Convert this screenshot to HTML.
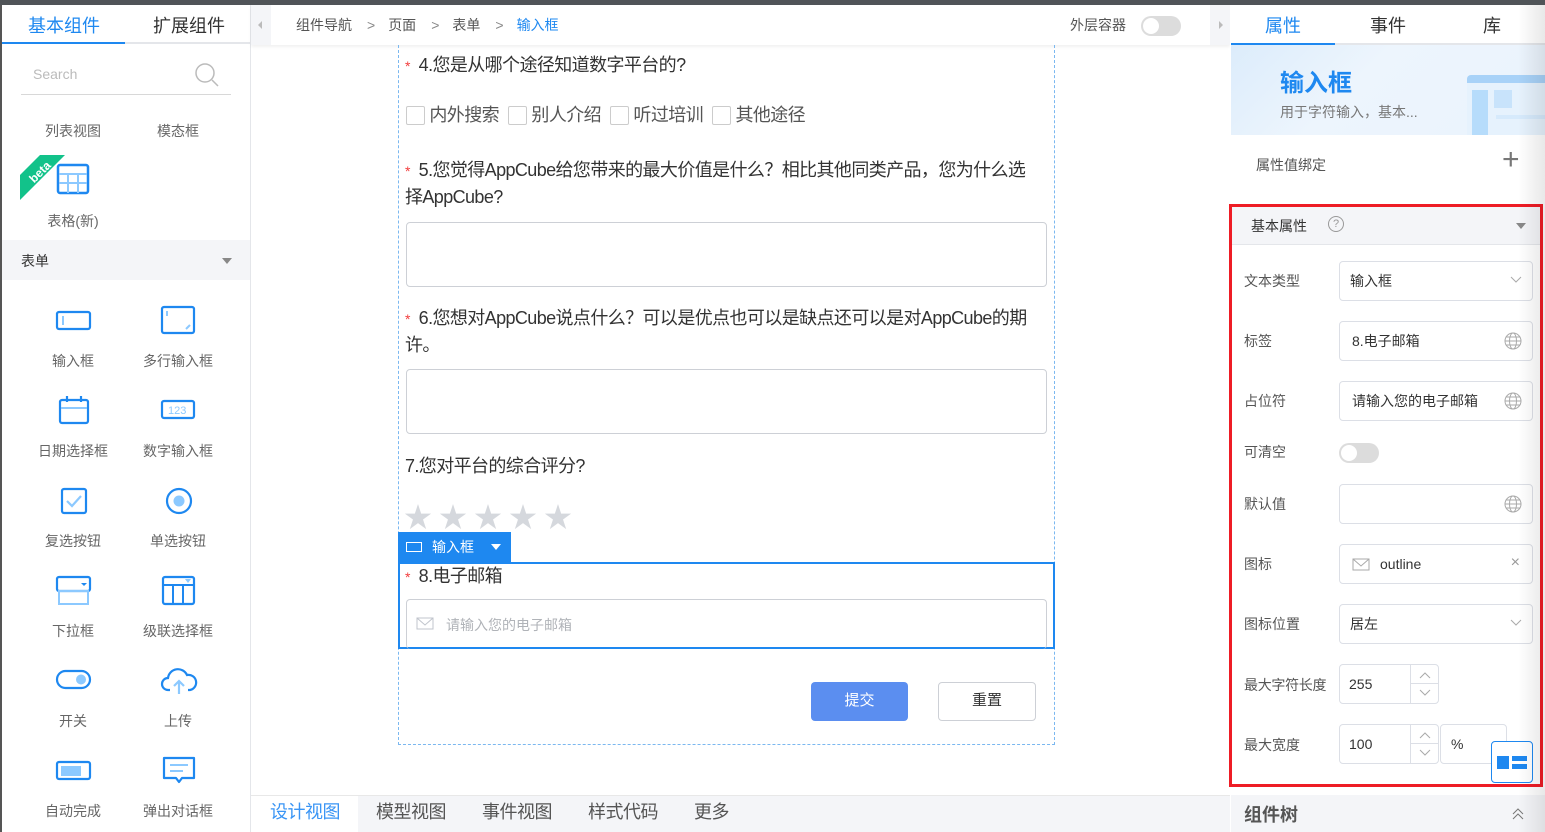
<!DOCTYPE html>
<html><head><meta charset="utf-8"><style>
*{box-sizing:border-box;margin:0;padding:0}
body{width:1545px;height:832px;overflow:hidden;background:#fff;font-family:"Liberation Sans","Noto Sans CJK SC",sans-serif;color:#333;position:relative}
.a{position:absolute}
.topbar{left:0;top:0;width:1545px;height:5px;background:#505458}
.lp{left:0;top:5px;width:251px;height:827px;background:#fff;border-right:1px solid #e4e6ea;border-left:2px solid #555}
.tab{font-size:18px;color:#333;white-space:nowrap}
.lbl{font-size:14px;color:#666;white-space:nowrap;text-align:center;width:110px}
.ic{stroke:#1e88f0;fill:none;stroke-width:2.2}
.cv{left:251px;top:5px;width:979px;height:827px;background:#fff}
.q{font-size:18px;color:#333;white-space:nowrap;letter-spacing:-0.6px}
.star{color:#d5d8dd;font-size:28px}
.req{color:#f23c3c;font-size:14px}
.rp{left:1230px;top:5px;width:315px;height:827px;background:#fff}
.fl{font-size:14px;color:#555;white-space:nowrap}
.inp{border:1px solid #dcdfe6;border-radius:4px;background:#fff;font-size:14px;color:#333;padding-left:12px;display:flex;align-items:center}
.glob{position:absolute;right:10px;top:50%;margin-top:-9px}
.chev{position:absolute;right:10px;top:50%;margin-top:-5px}
.cb{display:inline-block;width:19px;height:19px;border:1px solid #ccc;border-radius:2px;vertical-align:-4px}
</style></head><body>
<div class="a topbar"></div>

<!-- LEFT PANEL -->
<div class="a lp"></div>
<div class="a tab" style="left:28px;top:12px;color:#1e88f0">基本组件</div>
<div class="a tab" style="left:153px;top:12px">扩展组件</div>
<div class="a" style="left:2px;top:42px;width:248px;height:2px;background:#e4e6ea"></div>
<div class="a" style="left:2px;top:42px;width:123px;height:2px;background:#1e88f0"></div>
<div class="a" style="left:33px;top:66px;font-size:14px;color:#bbb">Search</div>
<svg class="a" style="left:194px;top:62px" width="26" height="26"><circle cx="11" cy="11" r="9" stroke="#bbb" stroke-width="1.5" fill="none"/><line x1="18" y1="18" x2="24" y2="24" stroke="#bbb" stroke-width="1.5"/></svg>
<div class="a" style="left:21px;top:94px;width:210px;height:1px;background:#d8d8d8"></div>
<div class="a lbl" style="left:18px;top:121px">列表视图</div>
<div class="a lbl" style="left:123px;top:121px">模态框</div>
<svg class="a" style="left:20px;top:155px" width="48" height="45"><polygon points="0,20 20,0 45,0 0,45" fill="#12c28a"/><text x="20" y="21" text-anchor="middle" transform="rotate(-45 20 17)" fill="#fff" font-size="12" font-weight="bold" font-family="Liberation Sans">beta</text></svg>
<svg class="a" style="left:56px;top:163px" width="34" height="32"><rect x="2" y="2" width="30" height="28" rx="2" stroke="#1e88f0" stroke-width="2.5" fill="none"/><path d="M3 11H31M3 20H31M12 11V30M22 11V30" stroke="#8cc9ff" stroke-width="2"/></svg>
<div class="a lbl" style="left:18px;top:211px">表格(新)</div>
<div class="a" style="left:2px;top:240px;width:248px;height:40px;background:#f4f5f8"></div>
<div class="a" style="left:21px;top:251px;font-size:14px;color:#333">表单</div>
<div class="a" style="left:222px;top:258px;border-left:5px solid transparent;border-right:5px solid transparent;border-top:6px solid #888"></div>

<svg class="a" style="left:55px;top:310px" width="38" height="22"><rect x="2" y="2" width="33" height="17" rx="2" class="ic"/><line x1="8" y1="6" x2="8" y2="15" stroke="#8cc9ff" stroke-width="2"/></svg>
<div class="a lbl" style="left:18px;top:351px">输入框</div>
<svg class="a" style="left:160px;top:305px" width="36" height="30"><rect x="2" y="2" width="32" height="26" rx="2" class="ic"/><line x1="7" y1="6" x2="7" y2="11" stroke="#8cc9ff" stroke-width="2"/><line x1="26" y1="24" x2="30" y2="20" stroke="#8cc9ff" stroke-width="2"/></svg>
<div class="a lbl" style="left:123px;top:351px">多行输入框</div>
<svg class="a" style="left:58px;top:395px" width="32" height="30"><rect x="2" y="5" width="28" height="23" rx="2" class="ic"/><path d="M9 1V7M23 1V7" class="ic"/><line x1="3" y1="13" x2="29" y2="13" stroke="#8cc9ff" stroke-width="2"/></svg>
<div class="a lbl" style="left:18px;top:441px">日期选择框</div>
<svg class="a" style="left:160px;top:399px" width="36" height="22"><rect x="2" y="2" width="32" height="17" rx="2" class="ic"/><text x="8" y="15" fill="#8cc9ff" font-size="11" font-family="Liberation Sans">123</text></svg>
<div class="a lbl" style="left:123px;top:441px">数字输入框</div>
<svg class="a" style="left:60px;top:487px" width="28" height="28"><rect x="2" y="2" width="24" height="24" rx="2" class="ic"/><path d="M7 14L12 19L21 9" stroke="#8cc9ff" stroke-width="2.2" fill="none"/></svg>
<div class="a lbl" style="left:18px;top:531px">复选按钮</div>
<svg class="a" style="left:165px;top:487px" width="28" height="28"><circle cx="14" cy="14" r="12" class="ic"/><circle cx="14" cy="14" r="5.5" fill="#8cc9ff"/></svg>
<div class="a lbl" style="left:123px;top:531px">单选按钮</div>
<svg class="a" style="left:55px;top:575px" width="38" height="32"><rect x="2" y="2" width="33" height="14" rx="2" class="ic"/><rect x="4" y="16" width="29" height="13" stroke="#8cc9ff" stroke-width="2" fill="none"/><polygon points="26,8 32,8 29,11" fill="#1e88f0"/></svg>
<div class="a lbl" style="left:18px;top:621px">下拉框</div>
<svg class="a" style="left:161px;top:575px" width="36" height="32"><rect x="2" y="2" width="31" height="27" rx="2" class="ic"/><path d="M3 10H32M12 11V29M22 11V29" stroke="#1e88f0" stroke-width="2"/><polygon points="24,4 30,4 27,8" fill="#8cc9ff"/></svg>
<div class="a lbl" style="left:123px;top:621px">级联选择框</div>
<svg class="a" style="left:55px;top:669px" width="38" height="22"><rect x="2" y="2" width="33" height="17" rx="8.5" class="ic"/><circle cx="26" cy="10.5" r="5" fill="#8cc9ff"/></svg>
<div class="a lbl" style="left:18px;top:711px">开关</div>
<svg class="a" style="left:160px;top:666px" width="38" height="30"><path d="M10 24H8A6 6 0 0 1 8 12A10 10 0 0 1 27 9A7.5 7.5 0 0 1 30 24H28" class="ic"/><path d="M19 28V16M14 20L19 15L24 20" stroke="#8cc9ff" stroke-width="2.2" fill="none"/></svg>
<div class="a lbl" style="left:123px;top:711px">上传</div>
<svg class="a" style="left:55px;top:760px" width="38" height="22"><rect x="2" y="2" width="33" height="17" rx="2" class="ic"/><rect x="6" y="6" width="20" height="10" fill="#8cc9ff"/></svg>
<div class="a lbl" style="left:18px;top:801px">自动完成</div>
<svg class="a" style="left:161px;top:755px" width="36" height="30"><path d="M3 3H33V23H21L18 27L15 23H3Z" class="ic" stroke-linejoin="round"/><path d="M9 10H27M9 16H22" stroke="#8cc9ff" stroke-width="2"/></svg>
<div class="a lbl" style="left:123px;top:801px">弹出对话框</div>

<!-- CENTER -->
<div class="a cv"></div>
<div class="a" style="left:251px;top:5px;width:979px;height:40px;background:#fff;box-shadow:0 2px 3px rgba(0,0,0,0.06)"></div>
<div class="a" style="left:251px;top:5px;width:20px;height:40px;background:#f4f5f8"></div>
<div class="a" style="left:258px;top:21px;border-top:4px solid transparent;border-bottom:4px solid transparent;border-right:4px solid #bbb"></div>
<div class="a" style="left:296px;top:15px;font-size:14px;color:#555;white-space:nowrap">组件导航<span style="margin:0 13px 0 15px;color:#888">&gt;</span>页面<span style="margin:0 13px 0 15px;color:#888">&gt;</span>表单<span style="margin:0 13px 0 15px;color:#888">&gt;</span><span style="color:#1e88f0">输入框</span></div>
<div class="a" style="left:1070px;top:15px;font-size:14px;color:#555">外层容器</div>
<div class="a" style="left:1141px;top:16px;width:40px;height:20px;border-radius:10px;background:#dcdcdc"><div style="position:absolute;left:2px;top:2px;width:16px;height:16px;border-radius:50%;background:#fff"></div></div>
<div class="a" style="left:1210px;top:5px;width:20px;height:40px;background:#f4f5f8"></div>
<div class="a" style="left:1219px;top:21px;border-top:4px solid transparent;border-bottom:4px solid transparent;border-left:4px solid #bbb"></div>

<div class="a" style="left:398px;top:45px;width:657px;height:700px;border:1px dashed #7bb8f0;border-top:none"></div>

<div class="a q" style="left:405px;top:51px"><span class="req">*</span>&nbsp; 4.您是从哪个途径知道数字平台的?</div>
<div class="a q" style="left:406px;top:101px;color:#555">
<span class="cb"></span> 内外搜索<span class="cb" style="margin-left:9px"></span> 别人介绍<span class="cb" style="margin-left:9px"></span> 听过培训<span class="cb" style="margin-left:9px"></span> 其他途径</div>

<div class="a q" style="left:405px;top:157px;line-height:26px"><span class="req">*</span>&nbsp; 5.您觉得AppCube给您带来的最大价值是什么？相比其他同类产品，您为什么选<br>择AppCube?</div>
<div class="a" style="left:406px;top:222px;width:641px;height:65px;border:1px solid #cdd0d6;border-radius:4px"></div>

<div class="a q" style="left:405px;top:305px;line-height:26px"><span class="req">*</span>&nbsp; 6.您想对AppCube说点什么？可以是优点也可以是缺点还可以是对AppCube的期<br>许。</div>
<div class="a" style="left:406px;top:369px;width:641px;height:65px;border:1px solid #cdd0d6;border-radius:4px"></div>

<div class="a q" style="left:405px;top:452px">7.您对平台的综合评分?</div>
<div class="a star" style="left:404px;top:496px;letter-spacing:7px">★★★★★</div>

<div class="a" style="left:398px;top:532px;width:113px;height:30px;background:#1e88f0;color:#fff;font-size:14px"><span style="position:absolute;left:8px;top:10px;width:16px;height:10px;border:1.5px solid #fff"></span><span style="position:absolute;left:34px;top:5px">输入框</span><span style="position:absolute;left:93px;top:12px;border-left:5px solid transparent;border-right:5px solid transparent;border-top:6px solid #fff"></span></div>
<div class="a" style="left:398px;top:562px;width:657px;height:87px;border:2px solid #1e88f0"></div>
<div class="a q" style="left:405px;top:562px"><span class="req">*</span>&nbsp; 8.电子邮箱</div>
<div class="a" style="left:406px;top:599px;width:641px;height:50px;border:1px solid #cdd0d6;border-radius:4px;border-bottom:none"></div>
<svg class="a" style="left:416px;top:617px" width="18" height="14"><rect x="1" y="1" width="16" height="11" stroke="#c0c4cc" fill="none"/><path d="M1 1L9 8L17 1" stroke="#c0c4cc" fill="none"/></svg>
<div class="a" style="left:446px;top:615px;font-size:14px;color:#b0b3b8">请输入您的电子邮箱</div>

<div class="a" style="left:811px;top:682px;width:97px;height:39px;background:#5b8ef0;border-radius:4px;color:#fff;font-size:15px;text-align:center;line-height:37px">提交</div>
<div class="a" style="left:938px;top:682px;width:98px;height:39px;border:1px solid #cdd0d6;border-radius:4px;color:#333;font-size:15px;text-align:center;line-height:35px">重置</div>

<div class="a" style="left:251px;top:795px;width:979px;height:37px;background:#f4f5f8;border-top:1px solid #e8e8e8"></div>
<div class="a" style="left:251px;top:796px;width:107px;height:36px;background:#fff"></div>
<div class="a" style="left:270px;top:798px;font-size:18px;color:#555;white-space:nowrap;letter-spacing:-0.5px"><span style="color:#3a95f5">设计视图</span><span style="margin-left:36px">模型视图</span><span style="margin-left:36px">事件视图</span><span style="margin-left:36px">样式代码</span><span style="margin-left:36px">更多</span></div>

<!-- RIGHT PANEL -->
<div class="a rp"></div>
<div class="a tab" style="left:1265px;top:12px;color:#1e88f0">属性</div>
<div class="a tab" style="left:1370px;top:12px">事件</div>
<div class="a tab" style="left:1483px;top:12px">库</div>
<div class="a" style="left:1231px;top:43px;width:314px;height:2px;background:#e4e6ea"></div>
<div class="a" style="left:1231px;top:43px;width:104px;height:2px;background:#1e88f0"></div>
<div class="a" style="left:1231px;top:45px;width:314px;height:90px;background:linear-gradient(135deg,#dcecfb 0%,#edf5fd 40%,#eaf3fd 100%)"></div>
<div class="a" style="left:1280px;top:63px;font-size:24px;font-weight:bold;color:#1e88f0">输入框</div>
<div class="a" style="left:1280px;top:102px;font-size:14px;color:#777">用于字符输入，基本...</div>
<div class="a" style="left:1467px;top:75px;width:80px;height:60px;background:#e6f2fd;border-top:8px solid #a8d2f8;border-radius:4px 0 0 0"></div>
<div class="a" style="left:1472px;top:90px;width:16px;height:45px;background:#b6dcfb"></div>
<div class="a" style="left:1494px;top:90px;width:18px;height:18px;background:#c8e3fb"></div>
<div class="a" style="left:1496px;top:115px;width:50px;height:4px;background:#d6eafc"></div>
<div class="a" style="left:1256px;top:155px;font-size:14px;color:#555">属性值绑定</div>
<div class="a" style="left:1502px;top:143px;font-size:30px;color:#777;font-weight:300">+</div>

<div class="a" style="left:1229px;top:204px;width:314px;height:583px;border:3px solid #ee1c25"></div>
<div class="a" style="left:1232px;top:207px;width:308px;height:38px;background:#f4f5f8;border-bottom:1px solid #e4e6ea"></div>
<div class="a" style="left:1251px;top:216px;font-size:14px;color:#333">基本属性</div>
<div class="a" style="left:1328px;top:216px;width:16px;height:16px;border:1px solid #999;border-radius:50%;font-size:11px;color:#999;text-align:center;line-height:14px">?</div>
<div class="a" style="left:1516px;top:223px;border-left:5px solid transparent;border-right:5px solid transparent;border-top:6px solid #888"></div>

<div class="a fl" style="left:1244px;top:271px">文本类型</div>
<div class="a inp" style="left:1339px;top:261px;width:194px;height:40px;padding-left:10px">输入框<svg class="chev" width="12" height="8"><path d="M1 1L6 6L11 1" stroke="#aaa" fill="none"/></svg></div>
<div class="a fl" style="left:1244px;top:331px">标签</div>
<div class="a inp" style="left:1339px;top:321px;width:194px;height:40px">8.电子邮箱<svg class="glob" width="18" height="18"><circle cx="9" cy="9" r="8" stroke="#aaa" fill="none"/><ellipse cx="9" cy="9" rx="3.5" ry="8" stroke="#aaa" fill="none"/><path d="M1 9H17M2.5 5H15.5M2.5 13H15.5" stroke="#aaa"/></svg></div>
<div class="a fl" style="left:1244px;top:391px">占位符</div>
<div class="a inp" style="left:1339px;top:381px;width:194px;height:40px">请输入您的电子邮箱<svg class="glob" width="18" height="18"><circle cx="9" cy="9" r="8" stroke="#aaa" fill="none"/><ellipse cx="9" cy="9" rx="3.5" ry="8" stroke="#aaa" fill="none"/><path d="M1 9H17M2.5 5H15.5M2.5 13H15.5" stroke="#aaa"/></svg></div>
<div class="a fl" style="left:1244px;top:442px">可清空</div>
<div class="a" style="left:1339px;top:443px;width:40px;height:20px;border-radius:10px;background:#dcdcdc"><div style="position:absolute;left:2px;top:2px;width:16px;height:16px;border-radius:50%;background:#fff"></div></div>
<div class="a fl" style="left:1244px;top:494px">默认值</div>
<div class="a inp" style="left:1339px;top:484px;width:194px;height:40px"><svg class="glob" width="18" height="18"><circle cx="9" cy="9" r="8" stroke="#aaa" fill="none"/><ellipse cx="9" cy="9" rx="3.5" ry="8" stroke="#aaa" fill="none"/><path d="M1 9H17M2.5 5H15.5M2.5 13H15.5" stroke="#aaa"/></svg></div>
<div class="a fl" style="left:1244px;top:554px">图标</div>
<div class="a inp" style="left:1339px;top:544px;width:194px;height:40px"><svg width="18" height="13" style="margin-right:10px"><rect x="1" y="1" width="16" height="11" stroke="#aaa" fill="none"/><path d="M1 1L9 8L17 1" stroke="#aaa" fill="none"/></svg>outline<span style="position:absolute;right:12px;top:9px;color:#999;font-size:16px">×</span></div>
<div class="a fl" style="left:1244px;top:614px">图标位置</div>
<div class="a inp" style="left:1339px;top:604px;width:194px;height:40px;padding-left:10px">居左<svg class="chev" width="12" height="8"><path d="M1 1L6 6L11 1" stroke="#aaa" fill="none"/></svg></div>
<div class="a fl" style="left:1244px;top:675px;letter-spacing:-0.3px">最大字符长度</div>
<div class="a inp" style="left:1339px;top:664px;width:100px;height:40px;padding-left:9px">255</div>
<div class="a" style="left:1410px;top:665px;width:28px;height:38px;border-left:1px solid #dcdfe6"><div style="height:19px;border-bottom:1px solid #dcdfe6;text-align:center"><svg width="12" height="8" style="margin-top:6px"><path d="M1 7L6 2L11 7" stroke="#aaa" fill="none"/></svg></div><div style="text-align:center"><svg width="12" height="8" style="margin-top:5px"><path d="M1 1L6 6L11 1" stroke="#aaa" fill="none"/></svg></div></div>
<div class="a fl" style="left:1244px;top:735px">最大宽度</div>
<div class="a inp" style="left:1339px;top:724px;width:100px;height:40px;padding-left:9px">100</div>
<div class="a" style="left:1410px;top:725px;width:28px;height:38px;border-left:1px solid #dcdfe6"><div style="height:19px;border-bottom:1px solid #dcdfe6;text-align:center"><svg width="12" height="8" style="margin-top:6px"><path d="M1 7L6 2L11 7" stroke="#aaa" fill="none"/></svg></div><div style="text-align:center"><svg width="12" height="8" style="margin-top:5px"><path d="M1 1L6 6L11 1" stroke="#aaa" fill="none"/></svg></div></div>
<div class="a inp" style="left:1440px;top:724px;width:67px;height:40px;padding-left:10px">%</div>
<div class="a" style="left:1491px;top:741px;width:42px;height:42px;border:1px solid #1e88f0;border-radius:4px;background:#fff"><div style="position:absolute;left:5px;top:14px;width:12px;height:13px;background:#1e88f0"></div><div style="position:absolute;left:20px;top:14px;width:15px;height:5px;background:#1e88f0"></div><div style="position:absolute;left:20px;top:22px;width:15px;height:5px;background:#1e88f0"></div></div>

<div class="a" style="left:1231px;top:795px;width:314px;height:37px;background:#f4f5f8"></div>
<div class="a" style="left:1244px;top:801px;font-size:18px;font-weight:bold;color:#555">组件树</div>
<svg class="a" style="left:1511px;top:807px" width="14" height="14"><path d="M2 7L7 2L12 7M2 12L7 7L12 12" stroke="#777" fill="none"/></svg>
<div class="a" style="left:1518px;top:5px;width:27px;height:827px;background:linear-gradient(90deg,rgba(0,0,0,0),rgba(0,0,0,0.09))"></div>
</body></html>
